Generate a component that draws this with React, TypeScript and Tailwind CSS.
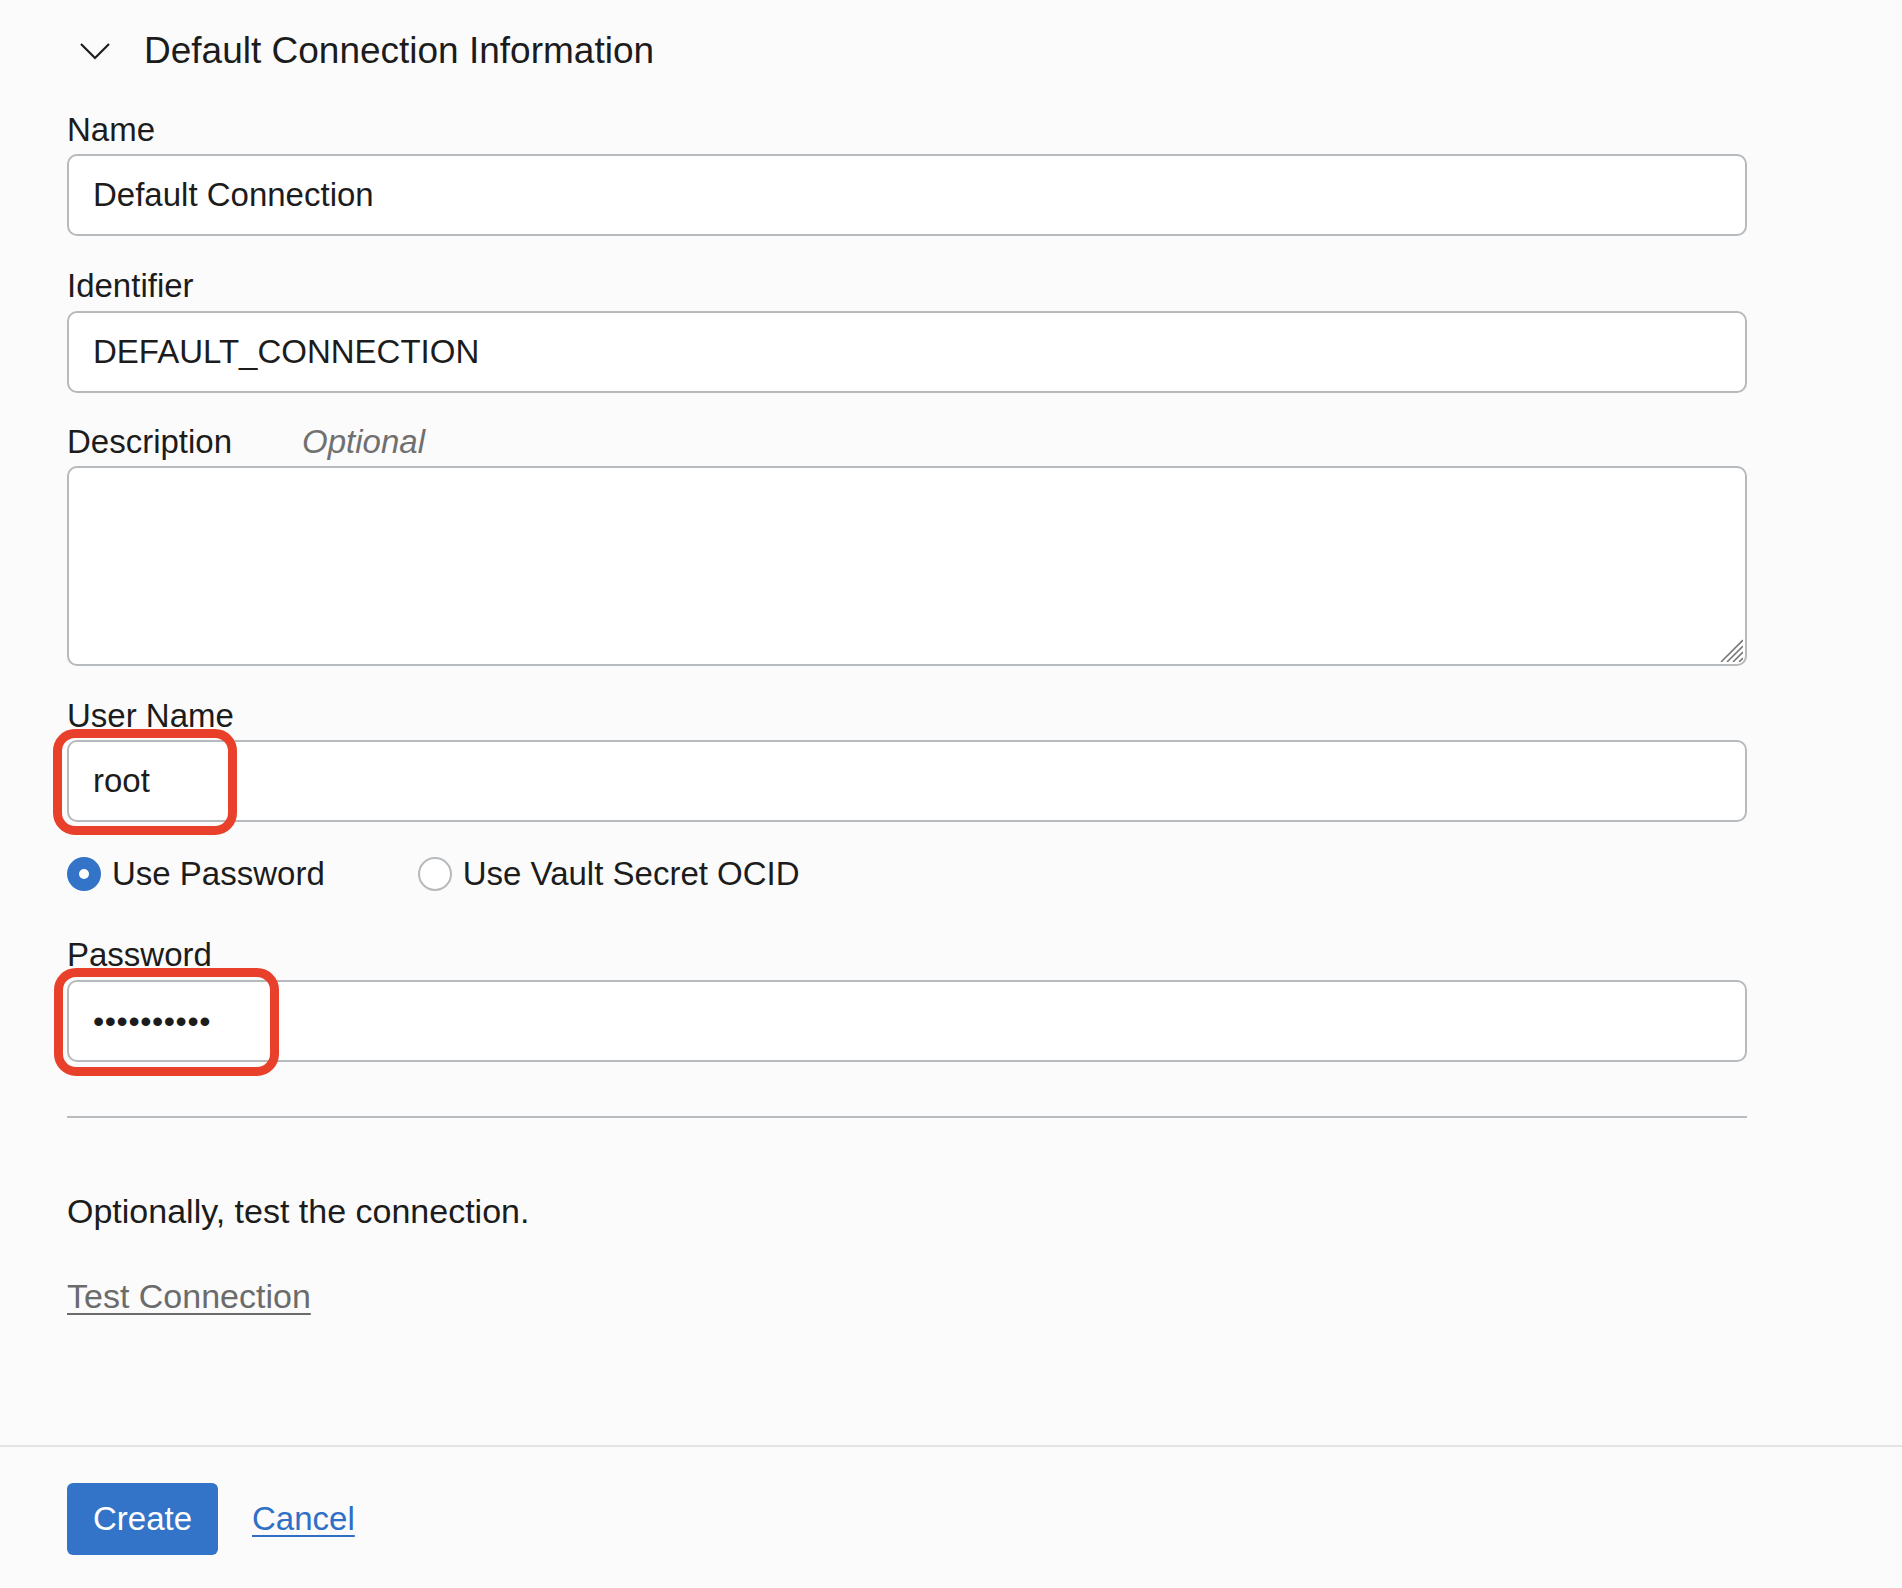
export default function App() {
  const label = "text-[33px] leading-[44px] text-[#1c1c1c]";
  const box =
    "relative flex h-[82px] w-[1680px] items-center rounded-[10px] border-2 border-[#b7babd] bg-white pl-[24px] text-[33px] text-[#1c1c1c]";

  return (
    <div className="min-h-[1588px] w-full bg-[#fbfbfb] font-['Liberation_Sans',Arial,sans-serif]">
      <div className="pl-[67px] pt-[29px]">
        {/* section header */}
        <div className="flex h-[44px] items-center">
          <svg className="ml-[13px]" width="30" height="17" viewBox="0 0 30 17" fill="none">
            <polyline points="1,1 15,15 29,1" stroke="#1c1c1c" strokeWidth="2.2" />
          </svg>
          <span className="ml-[34px] text-[37px] text-[#1c1c1c]">Default Connection Information</span>
        </div>

        <div className={`${label} mt-[35px]`}>Name</div>
        <div className={`${box} mt-[2px]`}>Default Connection</div>

        <div className={`${label} mt-[28px]`}>Identifier</div>
        <div className={`${box} mt-[3px]`}>DEFAULT_CONNECTION</div>

        <div className={`${label} mt-[27px] flex`}>
          <span>Description</span>
          <span className="ml-[70px] italic text-[#707070]">Optional</span>
        </div>
        <div className="relative mt-[2px] h-[200px] w-[1680px] rounded-[10px] border-2 border-[#b7babd] bg-white">
          <svg className="absolute bottom-[2px] right-[2px]" width="24" height="24" viewBox="0 0 24 24">
            <g stroke="#777" strokeWidth="1.6">
              <line x1="24" y1="2" x2="2" y2="24" />
              <line x1="24" y1="8" x2="8" y2="24" />
              <line x1="24" y1="14" x2="14" y2="24" />
              <line x1="24" y1="20" x2="20" y2="24" />
            </g>
          </svg>
        </div>

        <div className={`${label} mt-[28px]`}>User Name</div>
        <div className={`${box} mt-[2px]`}>
          <span>root</span>
          <div className="absolute left-[-16px] top-[-13px] h-[106px] w-[184px] rounded-[22px] border-[9px] border-[#e8402a]" />
        </div>

        {/* auth choice */}
        <div className="mt-[35px] flex h-[34px] items-center text-[33px] text-[#1c1c1c]">
          <span className="flex h-[34px] w-[34px] items-center justify-center rounded-full bg-[#3373c8]">
            <span className="h-[10px] w-[10px] rounded-full bg-white" />
          </span>
          <span className="ml-[11px]">Use Password</span>
          <span className="ml-[93px] h-[34px] w-[34px] rounded-full border-2 border-[#b7babd] bg-white" />
          <span className="ml-[11px]">Use Vault Secret OCID</span>
        </div>

        <div className={`${label} mt-[42px]`}>Password</div>
        <div className={`${box} mt-[3px]`}>
          <span className="text-[32px] tracking-[0.6px]">••••••••••</span>
          <div className="absolute left-[-15px] top-[-14px] h-[108px] w-[225px] rounded-[22px] border-[9px] border-[#e8402a]" />
        </div>

        <div className="mt-[54px] h-[2px] w-[1680px] bg-[#b9bcbf]" />

        <p className="mt-[71px] text-[34px] leading-[44px] text-[#1c1c1c]">Optionally, test the connection.</p>
        <a className="mt-[41px] inline-block text-[34px] leading-[44px] text-[#6b6b6b] underline decoration-2 underline-offset-[5px]">
          Test Connection
        </a>
      </div>

      <div className="mt-[127px] border-t-2 border-[#e4e4e4] pl-[67px] pt-[36px]">
        <div className="flex items-center">
          <button className="h-[72px] w-[151px] rounded-[6px] bg-[#3474c8] text-[33px] text-white">Create</button>
          <a className="ml-[34px] text-[33px] text-[#2f6fc6] underline decoration-2 underline-offset-[5px]">Cancel</a>
        </div>
      </div>
    </div>
  );
}
